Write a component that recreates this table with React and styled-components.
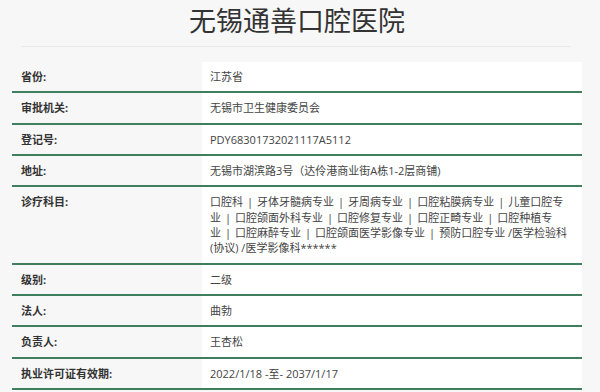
import React from 'react';
import styled, { createGlobalStyle } from 'styled-components';

const GlobalStyle = createGlobalStyle`
  html, body {
    margin: 0;
    padding: 0;
    background: #f7f7f7;
  }
  body {
    font-family: "Open Sans", "Noto Sans CJK SC", sans-serif;
    color: #333;
  }
`;

const Page = styled.div`
  width: 570px;
  margin: 0 0 0 12px;
`;

const Title = styled.h1`
  margin: 0;
  font-family: "Noto Sans CJK SC", sans-serif;
  font-size: 27px;
  font-weight: 400;
  line-height: 40px;
  text-align: center;
  color: #333;
`;

const Divider = styled.hr`
  margin: 6px 11px 15px 9px;
  border: 0;
  height: 1px;
  background: #e8e8e8;
`;

const Table = styled.div`
  display: flex;
  flex-direction: column;
`;

const Row = styled.div`
  display: grid;
  grid-template-columns: 190px 1fr;
  border-bottom: 2px solid #3f7f5e;
`;

const Label = styled.div`
  padding: 7px 9px;
  font-size: 11px;
  line-height: 15.33px;
  font-weight: 700;
  color: #333;
`;

const Value = styled.div`
  background: #fff;
  padding: 7px 8px;
  font-size: 11px;
  line-height: 15.33px;
  color: #444;
`;

const Sep = styled.span`
  margin: 0 4px;
`;

const subjects = [
  '口腔科',
  '牙体牙髓病专业',
  '牙周病专业',
  '口腔粘膜病专业',
  '儿童口腔专业',
  '口腔颌面外科专业',
  '口腔修复专业',
  '口腔正畸专业',
  '口腔种植专业',
  '口腔麻醉专业',
  '口腔颌面医学影像专业',
  '预防口腔专业 /医学检验科(协议) /医学影像科******',
];

const subjectNodes = subjects.map((s, i) => (
  <React.Fragment key={i}>
    {i > 0 && <Sep>|</Sep>}
    {s}
  </React.Fragment>
));

const rows = [
  ['省份:', '江苏省'],
  ['审批机关:', '无锡市卫生健康委员会'],
  ['登记号:', 'PDY68301732021117A5112'],
  ['地址:', '无锡市湖滨路3号（达伶港商业街A栋1-2层商铺)'],
  ['诊疗科目:', subjectNodes],
  ['级别:', '二级'],
  ['法人:', '曲勃'],
  ['负责人:', '王杏松'],
  ['执业许可证有效期:', '2022/1/18 -至- 2037/1/17'],
];

export default function App() {
  return (
    <>
      <GlobalStyle />
      <Page>
        <Title>无锡通善口腔医院</Title>
        <Divider />
        <Table>
          {rows.map(([label, value]) => (
            <Row key={label}>
              <Label>{label}</Label>
              <Value>{value}</Value>
            </Row>
          ))}
        </Table>
      </Page>
    </>
  );
}
